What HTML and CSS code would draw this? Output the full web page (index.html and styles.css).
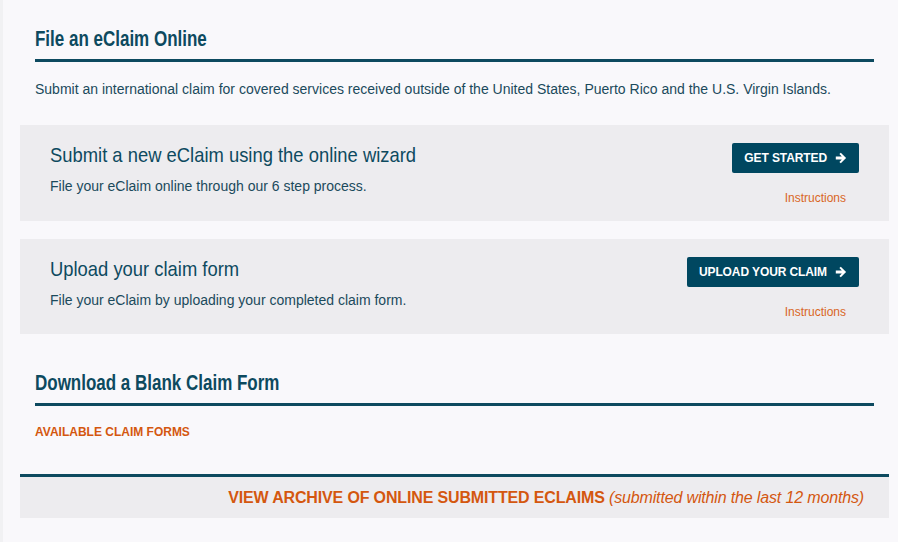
FILE: index.html
```html
<!DOCTYPE html>
<html lang="en">
<head>
<meta charset="utf-8">
<title>File an eClaim Online</title>
<link rel="stylesheet" href="styles.css">
</head>
<body>
<div class="page">
  <section class="section">
    <h2 class="section-title"><span class="narrow">File an eClaim Online</span></h2>
    <p class="intro">Submit an international claim for covered services received outside of the United States, Puerto Rico and the U.S. Virgin Islands.</p>
  </section>

  <div class="card card-first">
    <div class="card-text">
      <h3 class="card-title"><span class="narrow-light">Submit a new eClaim using the online wizard</span></h3>
      <p class="card-desc">File your eClaim online through our 6 step process.</p>
    </div>
    <div class="card-actions">
      <a class="btn" href="#">GET STARTED <svg class="arrow" viewBox="0 0 12 12" width="12" height="12"><path d="M0.8 4.5h6L4.4 2.1 5.8 0.7l5.3 5.3-5.3 5.3-1.4-1.4 2.4-2.4h-6z" fill="#fff"/></svg></a>
      <a class="instructions" href="#">Instructions</a>
    </div>
  </div>

  <div class="card">
    <div class="card-text">
      <h3 class="card-title"><span class="narrow-light">Upload your claim form</span></h3>
      <p class="card-desc">File your eClaim by uploading your completed claim form.</p>
    </div>
    <div class="card-actions">
      <a class="btn" href="#">UPLOAD YOUR CLAIM <svg class="arrow" viewBox="0 0 12 12" width="12" height="12"><path d="M0.8 4.5h6L4.4 2.1 5.8 0.7l5.3 5.3-5.3 5.3-1.4-1.4 2.4-2.4h-6z" fill="#fff"/></svg></a>
      <a class="instructions" href="#">Instructions</a>
    </div>
  </div>

  <section class="section section-download">
    <h2 class="section-title"><span class="narrow">Download a Blank Claim Form</span></h2>
    <a class="forms-link" href="#">AVAILABLE CLAIM FORMS</a>
  </section>

  <div class="archive">
    <a class="archive-link" href="#"><span class="archive-strong">VIEW ARCHIVE OF ONLINE SUBMITTED ECLAIMS</span> <em class="archive-note">(submitted within the last 12 months)</em></a>
  </div>
</div>
</body>
</html>
```
FILE: styles.css
```css
html, body {
  margin: 0;
  padding: 0;
  background: #f9f8fb;
}
body {
  font-family: "Liberation Sans", Arial, sans-serif;
  color: #1b4a5c;
}
.page {
  padding: 0 9px 24px 17px;
  border-left: 3px solid #f1f1f3;
}
a { text-decoration: none; }

.section { padding: 26px 15px 0; }
.section-title {
  margin: 0;
  font-family: "Liberation Sans", Arial, sans-serif;
  font-size: 22px;
  line-height: 26px;
  font-weight: bold;
  color: #0d4a5f;
  padding-bottom: 7px;
  border-bottom: 3px solid #0d4a5f;
  white-space: nowrap;
}
.narrow {
  display: inline-block;
  transform: scaleX(0.772);
  transform-origin: left center;
}
.narrow-light {
  display: inline-block;
  transform: scaleX(0.876);
  transform-origin: left center;
}
.intro {
  margin: 18px 0 0;
  font-size: 14px;
  line-height: 18px;
  color: #1b4a5c;
}

.card {
  display: flex;
  justify-content: space-between;
  background: #edecef;
  height: 95px;
  box-sizing: border-box;
  margin-top: 18px;
  padding: 17px 30px 0;
}
.card-first { margin-top: 27px; height: 96px; }
.card-title {
  margin: 0;
  font-family: "Liberation Sans", Arial, sans-serif;
  font-size: 21px;
  line-height: 26px;
  font-weight: normal;
  color: #0d4a5f;
  white-space: nowrap;
}
.card-desc {
  margin: 10px 0 0;
  font-size: 14px;
  line-height: 16px;
  color: #1b4a5c;
}
.card-actions {
  display: flex;
  flex-direction: column;
  align-items: flex-end;
}
.btn {
  display: flex;
  align-items: center;
  gap: 8px;
  height: 30px;
  box-sizing: border-box;
  padding: 0 12px 0 12px;
  background: #004760;
  border-radius: 2px;
  color: #fff;
  font-size: 12px;
  font-weight: bold;
  letter-spacing: -0.1px;
  margin-top: 1px;
}
.arrow { display: block; }
.instructions {
  margin-top: 18px;
  margin-right: 13px;
  font-size: 12px;
  line-height: 14px;
  color: #d9661f;
}

.section-download { padding-top: 36px; }
.forms-link {
  display: block;
  margin-top: 19px;
  font-size: 12px;
  line-height: 14px;
  font-weight: bold;
  color: #d4570f;
}

.archive {
  margin-top: 35px;
  border-top: 3px solid #0d4a5f;
  background: #edecef;
  height: 41px;
  display: flex;
  align-items: center;
  justify-content: flex-end;
  padding-right: 25px;
}
.archive-link {
  font-size: 16px;
  color: #d4570f;
  letter-spacing: -0.15px;
}
.archive-strong { font-weight: bold; }
.archive-note { font-style: italic; }
```
